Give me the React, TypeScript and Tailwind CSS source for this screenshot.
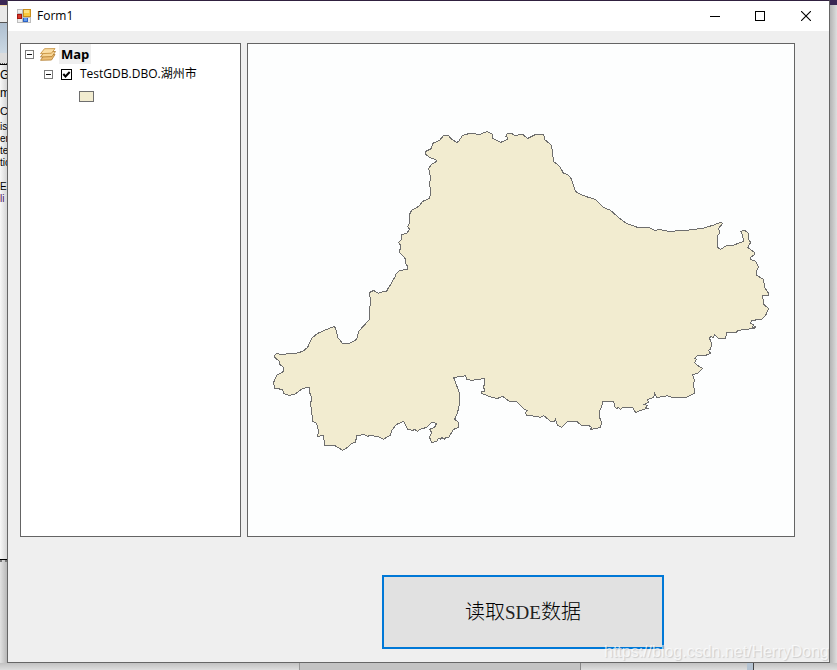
import { useState } from 'react'

const DISTRICT_PATH =
  'M380 292 L387 291 L389 287 L392 283 L393 280 L396 276 L396 274 L400 270 L408 269 L408 266 L406 263 L406 259 L403 255 L400 252 L401 245 L399 242 L402 239 L402 234 L407 233 L410 229 L408 226 L410 223 L410 214 L412 210 L416 208 L420 205 L423 201 L430 198 L431 192 L430 183 L431 177 L429 168 L432 164 L437 161 L436 159 L430 157 L426 154 L426 151 L432 148 L433 143 L440 140 L444 135 L449 135 L451 138 L457 142 L459 141 L463 135 L470 133 L480 134 L488 131 L489 132 L493 134 L493 138 L497 140 L501 142 L508 139 L508 137 L506 136 L508 133 L512 133 L515 135 L523 134 L528 138 L536 134 L544 134 L545 139 L552 145 L553 153 L554 161 L560 166 L564 173 L568 174 L571 177 L574 185 L576 191 L581 194 L589 197 L596 199 L604 207 L611 210 L620 218 L627 223 L638 227 L649 227 L655 230 L660 229 L669 231 L686 230 L703 228 L713 225 L721 222 L723 223 L719 228 L720 233 L718 235 L718 247 L721 249 L727 245 L733 245 L744 241 L743 235 L741 231 L745 230 L749 233 L749 239 L751 242 L748 247 L752 250 L755 252 L755 254 L751 257 L751 259 L756 261 L759 267 L757 270 L757 275 L764 279 L765 287 L769 293 L769 295 L763 295 L764 304 L769 308 L766 315 L762 319 L752 320 L751 323 L754 324 L753 327 L756 326 L755 328 L738 330 L737 332 L727 332 L726 338 L719 338 L715 334 L714 337 L711 336 L710 338 L712 343 L711 349 L709 350 L711 353 L706 355 L698 355 L695 358 L697 359 L695 362 L698 365 L703 368 L698 373 L693 374 L695 380 L694 383 L695 393 L687 397 L672 397 L667 395 L666 396 L657 397 L655 393 L654 397 L648 399 L649 402 L645 404 L648 405 L646 407 L648 408 L644 409 L636 412 L633 407 L623 407 L621 409 L619 407 L617 408 L615 406 L614 401 L606 401 L603 401 L602 407 L600 410 L600 417 L602 422 L601 427 L591 429 L592 427 L589 425 L582 425 L577 421 L568 421 L562 427 L558 425 L556 419 L555 421 L551 421 L544 415 L541 417 L537 416 L527 415 L526 412 L528 410 L525 409 L517 401 L510 401 L503 396 L498 398 L492 397 L482 393 L482 391 L485 391 L484 386 L485 384 L485 378 L472 380 L467 379 L466 375 L463 376 L454 377 L457 385 L460 393 L460 403 L458 412 L455 419 L459 422 L459 427 L454 429 L449 437 L446 437 L445 439 L442 437 L441 439 L439 438 L437 441 L432 442 L430 437 L432 432 L430 429 L435 427 L437 423 L432 422 L427 427 L420 429 L418 431 L415 429 L413 430 L408 429 L404 421 L397 424 L392 430 L391 435 L388 436 L384 439 L378 436 L370 435 L368 436 L364 434 L360 435 L357 435 L356 442 L352 443 L348 447 L343 450 L335 445 L325 445 L324 435 L318 436 L319 431 L317 423 L313 421 L312 410 L311 404 L312 397 L310 392 L310 387 L303 388 L295 394 L289 395 L284 393 L283 389 L275 388 L274 382 L277 375 L284 371 L284 367 L280 364 L280 361 L275 357 L275 355 L277 353 L281 354 L296 353 L303 351 L308 347 L312 338 L318 333 L327 329 L335 326 L337 331 L338 337 L343 343 L350 343 L357 339 L359 331 L370 319 L370 307 L371 303 L370 292 L374 290 L379 293 Z'

const EDITOR_LINES = [
  { text: 'G', className: 'h-5 text-xs leading-5' },
  { text: 'm', className: 'h-4 text-xs leading-4' },
  { text: 'Co', className: 'h-5 text-[11px] leading-5' },
  { text: 'is', className: 'h-3 text-[10px] leading-3' },
  { text: 'en', className: 'h-3 text-[10px] leading-3' },
  { text: 'te', className: 'h-3 text-[10px] leading-3' },
  { text: 'tio', className: 'h-3 text-[10px] leading-3' },
  { text: 'ES', className: 'mt-3 h-3 text-[10px] leading-3' },
  { text: 'li', className: 'h-3 text-[10px] leading-3 text-[#4b0f5c]' },
]

function FormIcon() {
  return (
    <svg viewBox="0 0 14 14" className="size-3.5 shrink-0" shapeRendering="crispEdges" aria-hidden="true">
      <rect x="0" y="0" width="14" height="14" fill="#bdbdbd" />
      <rect x="1" y="1" width="4" height="3" fill="#ededed" />
      <rect x="1" y="10" width="4" height="3" fill="#ededed" />
      <rect x="11" y="9" width="2" height="4" fill="#ededed" />
      <rect x="6" y="0" width="8" height="8" fill="#c98f1d" />
      <rect x="7" y="1" width="6" height="6" fill="#f8c93c" />
      <rect x="7" y="1" width="5" height="3" fill="#fde07e" />
      <rect x="0" y="5" width="5" height="5" fill="#a5170f" />
      <rect x="1" y="6" width="3" height="3" fill="#d8382a" />
      <rect x="6" y="9" width="5" height="4" fill="#2d62c4" />
      <rect x="7" y="9" width="3" height="3" fill="#5f9bf0" />
    </svg>
  )
}

function LayersIcon() {
  return (
    <svg viewBox="0 0 16 13" className="h-[13px] w-4 shrink-0" aria-hidden="true">
      <path d="M4.500 6.500L15 6.500L11.500 12L.5 12.300Z" fill="#eec077" stroke="#b07a2c" strokeWidth=".8" />
      <path d="M4.500 3.500L15.500 3.500L12 8.600L.5 9Z" fill="#f7d595" stroke="#b07a2c" strokeWidth=".8" />
      <path d="M4.500 .7L15 .6L11.500 5.200L.5 5.700Z" fill="#fbdfa6" stroke="#c18a35" strokeWidth=".8" />
    </svg>
  )
}

function Expander({ label, open, onToggle }: { label: string; open: boolean; onToggle: () => void }) {
  return (
    <button
      type="button"
      aria-label={label}
      aria-expanded={open}
      onClick={onToggle}
      className="flex size-[9px] shrink-0 items-center justify-center border border-[#7b7b7b] bg-white"
    >
      <svg viewBox="0 0 5 5" className="size-[5px]" shapeRendering="crispEdges" aria-hidden="true">
        <path d={open ? 'M0 2H5V3H0Z' : 'M0 2H5V3H0ZM2 0H3V5H2Z'} fill="#111" />
      </svg>
    </button>
  )
}

function TitleBar() {
  return (
    <header className="flex h-[30px] shrink-0 items-center bg-white pl-[9px]">
      <FormIcon />
      <h1 className="ml-1.5 flex-1 text-xs leading-4">Form1</h1>
      <button type="button" aria-label="Minimize" className="flex h-full w-[45px] items-center justify-center">
        <svg viewBox="0 0 10 10" className="size-2.5" shapeRendering="crispEdges">
          <path d="M0 5H10V6H0Z" />
        </svg>
      </button>
      <button type="button" aria-label="Maximize" className="flex h-full w-[46px] items-center justify-center">
        <svg viewBox="0 0 10 10" className="size-2.5" shapeRendering="crispEdges">
          <path d="M.5 .5H9.500V9.500H.5Z" fill="none" stroke="#000" />
        </svg>
      </button>
      <button type="button" aria-label="Close" className="flex h-full w-[46px] items-center justify-center">
        <svg viewBox="0 0 10 10" className="size-2.5">
          <path d="M0 0L10 10M10 0L0 10" stroke="#000" strokeWidth="1.1" />
        </svg>
      </button>
    </header>
  )
}

function LayerTree({ visible, onVisible }: { visible: boolean; onVisible: (v: boolean) => void }) {
  const [mapOpen, setMapOpen] = useState(true)
  const [layerOpen, setLayerOpen] = useState(true)

  return (
    <nav aria-label="Layers" className="border border-[#646464] bg-white text-xs">
      <div className="flex h-5 items-center pl-1">
        <Expander label="Map" open={mapOpen} onToggle={() => setMapOpen(!mapOpen)} />
        <span className="ml-1.5 flex">
          <LayersIcon />
        </span>
        <span className="ml-[3px] h-5 bg-[#efefef] px-0.5 text-[13px] leading-5 font-bold">Map</span>
      </div>
      {mapOpen && (
        <>
          <div className="flex h-5 items-center pl-[23px]">
            <Expander label="TestGDB.DBO.湖州市" open={layerOpen} onToggle={() => setLayerOpen(!layerOpen)} />
            <label className="ml-2 flex items-center leading-5">
              <input
                type="checkbox"
                checked={visible}
                onChange={(e) => onVisible(e.target.checked)}
                className="peer size-[11px] appearance-none border border-black bg-white"
              />
              <svg
                viewBox="0 0 11 11"
                className="invisible -ml-[11px] size-[11px] peer-checked:visible"
                aria-hidden="true"
              >
                <path d="M2.300 5L4.500 7.500L8.700 3" fill="none" stroke="#000" strokeWidth="2" />
              </svg>
              <span className="ml-2">TestGDB.DBO.湖州市</span>
            </label>
          </div>
          {layerOpen && (
            <div className="flex h-6 items-center pl-[58px]">
              <span className="h-[11px] w-[15px] border border-[#6e6e6e] bg-[#f2ecd0]" />
            </div>
          )}
        </>
      )}
    </nav>
  )
}

function MapView({ visible }: { visible: boolean }) {
  return (
    <section aria-label="Map view" className="min-w-0 border border-[#646464] bg-[#fdfefe]">
      <svg viewBox="248 44 546 492" className="block h-full w-full" role="img" aria-label="湖州市">
        {visible && (
          <path
            d={DISTRICT_PATH}
            transform="translate(-.4 .4)"
            fill="#f2ecd0"
            stroke="#6e6e6e"
            strokeWidth="1"
            shapeRendering="crispEdges"
          />
        )}
      </svg>
    </section>
  )
}

// Sliver of the editor that stays visible to the left of the form
function EditorEdge() {
  return (
    <aside className="flex w-[7px] shrink-0 flex-col overflow-hidden bg-[#e2e2e2]" aria-hidden="true">
      <div className="h-[5px] shrink-0 bg-[#3b2755]" />
      <div className="h-[18px] shrink-0 border-t border-b border-t-[#f5d9a5] border-b-[#555] bg-[#e9e9e9]" />
      <div className="h-[30px] shrink-0 bg-gradient-to-b from-[#aebfd0] to-[#cbd8e3]" />
      <div className="h-[11px] shrink-0 border-b border-dotted border-[#555] bg-[#dcdcdc]" />
      <div className="flex-1 border-t border-b border-black bg-gradient-to-r from-[#f8f8f8] to-[#d5d5d5] font-['Liberation_Sans',sans-serif] whitespace-nowrap">
        {EDITOR_LINES.map((line) => (
          <div key={line.text} className={line.className}>
            {line.text}
          </div>
        ))}
      </div>
      <div className="h-[103px] shrink-0 border-t-2 border-dotted border-[#777] bg-gradient-to-r from-[#e2e2e2] to-[#b8b8b8]" />
    </aside>
  )
}

export default function App() {
  const [visible, setVisible] = useState(true)

  return (
    <div className="relative flex min-h-screen flex-col overflow-hidden bg-[#dcdcdc] font-['Open_Sans','Noto_Sans_CJK_SC',sans-serif] text-black">
      <div className="flex flex-1">
        <EditorEdge />
        <main className="flex min-w-0 flex-1 flex-col border border-[#666] border-t-[#30203f] bg-[#efefef]">
          <TitleBar />
          <div className="grid flex-1 grid-cols-[221px_minmax(0,1fr)] grid-rows-[minmax(494px,1fr)_74px] gap-x-1.5 gap-y-[38px] pt-3 pr-[34px] pb-[13px] pl-3">
            <LayerTree visible={visible} onVisible={setVisible} />
            <MapView visible={visible} />
            <button
              type="button"
              onClick={() => setVisible(true)}
              className="col-start-2 ml-[135px] w-[282px] border-2 border-[#0078d7] bg-[#e1e1e1] font-['Liberation_Serif','Noto_Sans_CJK_SC',serif] text-xl font-light"
            >
              读取<span className="text-[19px] text-[#222]">SDE</span>数据
            </button>
          </div>
        </main>
        <div className="w-[7px] shrink-0 border-t-[5px] border-[#3b2755] bg-gradient-to-r from-[#b4b4b4] to-[#dedede]" />
      </div>
      <div className="flex h-[7px] shrink-0 bg-gradient-to-b from-[#c2c2c2] to-[#dedede]">
        <div className="w-[300px] border-r border-[#999]" />
        <div className="w-[281px] border-r border-[#888] bg-[#c3c3c3]" />
        <div className="flex w-[173px] justify-end border-r border-[#444]">
          <div className="w-1.5 bg-[#b4c3d2]" />
        </div>
      </div>
      <p className="pointer-events-none absolute right-2 bottom-2 font-['Liberation_Sans',sans-serif] text-base leading-5 text-white/70 [text-shadow:1px_1px_1px_#00000026]">
        https://blog.csdn.net/HerryDong
      </p>
    </div>
  )
}
